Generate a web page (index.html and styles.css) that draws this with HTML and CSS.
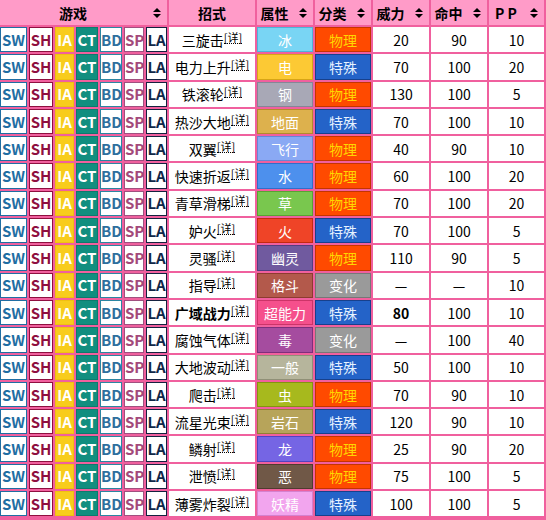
FILE: index.html
```html
<!DOCTYPE html>
<html lang="zh">
<head>
<meta charset="utf-8">
<title>招式表</title>
<link rel="stylesheet" href="styles.css">
</head>
<body>
<div class="wrap">
<table class="moves">
<colgroup>
<col class="w27"><col class="w24"><col class="w19"><col class="w22"><col class="w22"><col class="w20"><col class="w21">
<col class="w86"><col class="w56"><col class="w56"><col class="w56"><col class="w56"><col class="w55">
</colgroup>
<thead>
<tr>
<th colspan="7"><div class="hd"><span class="lbl">游戏</span><svg class="sort" viewBox="0 0 8 10" width="8" height="10"><polygon points="0,4 4,0 8,4"/><polygon points="0,6 8,6 4,10"/></svg></div></th>
<th><div class="hd plain"><span class="lbl">招式</span></div></th>
<th><div class="hd"><span class="lbl">属性</span><svg class="sort" viewBox="0 0 8 10" width="8" height="10"><polygon points="0,4 4,0 8,4"/><polygon points="0,6 8,6 4,10"/></svg></div></th>
<th><div class="hd"><span class="lbl">分类</span><svg class="sort" viewBox="0 0 8 10" width="8" height="10"><polygon points="0,4 4,0 8,4"/><polygon points="0,6 8,6 4,10"/></svg></div></th>
<th><div class="hd"><span class="lbl">威力</span><svg class="sort" viewBox="0 0 8 10" width="8" height="10"><polygon points="0,4 4,0 8,4"/><polygon points="0,6 8,6 4,10"/></svg></div></th>
<th><div class="hd"><span class="lbl">命中</span><svg class="sort" viewBox="0 0 8 10" width="8" height="10"><polygon points="0,4 4,0 8,4"/><polygon points="0,6 8,6 4,10"/></svg></div></th>
<th><div class="hd"><span class="lbl">P P</span><svg class="sort" viewBox="0 0 8 10" width="8" height="10"><polygon points="0,4 4,0 8,4"/><polygon points="0,6 8,6 4,10"/></svg></div></th>
</tr>
</thead>
<tbody>
<tr><td class="g sw">SW</td><td class="g sh">SH</td><td class="g ia">IA</td><td class="g ct">CT</td><td class="g bd">BD</td><td class="g sp">SP</td><td class="g la">LA</td><td class="mv">三旋击<span class="sup">[详]</span></td><td class="ty t-ice">冰</td><td class="ca c-phy">物理</td><td>20</td><td>90</td><td>10</td></tr>
<tr><td class="g sw">SW</td><td class="g sh">SH</td><td class="g ia">IA</td><td class="g ct">CT</td><td class="g bd">BD</td><td class="g sp">SP</td><td class="g la">LA</td><td class="mv">电力上升<span class="sup">[详]</span></td><td class="ty t-ele">电</td><td class="ca c-spe">特殊</td><td>70</td><td>100</td><td>20</td></tr>
<tr><td class="g sw">SW</td><td class="g sh">SH</td><td class="g ia">IA</td><td class="g ct">CT</td><td class="g bd">BD</td><td class="g sp">SP</td><td class="g la">LA</td><td class="mv">铁滚轮<span class="sup">[详]</span></td><td class="ty t-ste">钢</td><td class="ca c-phy">物理</td><td>130</td><td>100</td><td>5</td></tr>
<tr><td class="g sw">SW</td><td class="g sh">SH</td><td class="g ia">IA</td><td class="g ct">CT</td><td class="g bd">BD</td><td class="g sp">SP</td><td class="g la">LA</td><td class="mv">热沙大地<span class="sup">[详]</span></td><td class="ty t-gro">地面</td><td class="ca c-spe">特殊</td><td>70</td><td>100</td><td>10</td></tr>
<tr><td class="g sw">SW</td><td class="g sh">SH</td><td class="g ia">IA</td><td class="g ct">CT</td><td class="g bd">BD</td><td class="g sp">SP</td><td class="g la">LA</td><td class="mv">双翼<span class="sup">[详]</span></td><td class="ty t-fly">飞行</td><td class="ca c-phy">物理</td><td>40</td><td>90</td><td>10</td></tr>
<tr><td class="g sw">SW</td><td class="g sh">SH</td><td class="g ia">IA</td><td class="g ct">CT</td><td class="g bd">BD</td><td class="g sp">SP</td><td class="g la">LA</td><td class="mv">快速折返<span class="sup">[详]</span></td><td class="ty t-wat">水</td><td class="ca c-phy">物理</td><td>60</td><td>100</td><td>20</td></tr>
<tr><td class="g sw">SW</td><td class="g sh">SH</td><td class="g ia">IA</td><td class="g ct">CT</td><td class="g bd">BD</td><td class="g sp">SP</td><td class="g la">LA</td><td class="mv">青草滑梯<span class="sup">[详]</span></td><td class="ty t-gra">草</td><td class="ca c-phy">物理</td><td>70</td><td>100</td><td>20</td></tr>
<tr><td class="g sw">SW</td><td class="g sh">SH</td><td class="g ia">IA</td><td class="g ct">CT</td><td class="g bd">BD</td><td class="g sp">SP</td><td class="g la">LA</td><td class="mv">妒火<span class="sup">[详]</span></td><td class="ty t-fir">火</td><td class="ca c-spe">特殊</td><td>70</td><td>100</td><td>5</td></tr>
<tr><td class="g sw">SW</td><td class="g sh">SH</td><td class="g ia">IA</td><td class="g ct">CT</td><td class="g bd">BD</td><td class="g sp">SP</td><td class="g la">LA</td><td class="mv">灵骚<span class="sup">[详]</span></td><td class="ty t-gho">幽灵</td><td class="ca c-phy">物理</td><td>110</td><td>90</td><td>5</td></tr>
<tr><td class="g sw">SW</td><td class="g sh">SH</td><td class="g ia">IA</td><td class="g ct">CT</td><td class="g bd">BD</td><td class="g sp">SP</td><td class="g la">LA</td><td class="mv">指导<span class="sup">[详]</span></td><td class="ty t-fig">格斗</td><td class="ca c-sta">变化</td><td>—</td><td>—</td><td>10</td></tr>
<tr><td class="g sw">SW</td><td class="g sh">SH</td><td class="g ia">IA</td><td class="g ct">CT</td><td class="g bd">BD</td><td class="g sp">SP</td><td class="g la">LA</td><td class="mv"><b>广域战力</b><span class="sup">[详]</span></td><td class="ty t-psy">超能力</td><td class="ca c-spe">特殊</td><td><b>80</b></td><td>100</td><td>10</td></tr>
<tr><td class="g sw">SW</td><td class="g sh">SH</td><td class="g ia">IA</td><td class="g ct">CT</td><td class="g bd">BD</td><td class="g sp">SP</td><td class="g la">LA</td><td class="mv">腐蚀气体<span class="sup">[详]</span></td><td class="ty t-poi">毒</td><td class="ca c-sta">变化</td><td>—</td><td>100</td><td>40</td></tr>
<tr><td class="g sw">SW</td><td class="g sh">SH</td><td class="g ia">IA</td><td class="g ct">CT</td><td class="g bd">BD</td><td class="g sp">SP</td><td class="g la">LA</td><td class="mv">大地波动<span class="sup">[详]</span></td><td class="ty t-nor">一般</td><td class="ca c-spe">特殊</td><td>50</td><td>100</td><td>10</td></tr>
<tr><td class="g sw">SW</td><td class="g sh">SH</td><td class="g ia">IA</td><td class="g ct">CT</td><td class="g bd">BD</td><td class="g sp">SP</td><td class="g la">LA</td><td class="mv">爬击<span class="sup">[详]</span></td><td class="ty t-bug">虫</td><td class="ca c-phy">物理</td><td>70</td><td>90</td><td>10</td></tr>
<tr><td class="g sw">SW</td><td class="g sh">SH</td><td class="g ia">IA</td><td class="g ct">CT</td><td class="g bd">BD</td><td class="g sp">SP</td><td class="g la">LA</td><td class="mv">流星光束<span class="sup">[详]</span></td><td class="ty t-roc">岩石</td><td class="ca c-spe">特殊</td><td>120</td><td>90</td><td>10</td></tr>
<tr><td class="g sw">SW</td><td class="g sh">SH</td><td class="g ia">IA</td><td class="g ct">CT</td><td class="g bd">BD</td><td class="g sp">SP</td><td class="g la">LA</td><td class="mv">鳞射<span class="sup">[详]</span></td><td class="ty t-dra">龙</td><td class="ca c-phy">物理</td><td>25</td><td>90</td><td>20</td></tr>
<tr><td class="g sw">SW</td><td class="g sh">SH</td><td class="g ia">IA</td><td class="g ct">CT</td><td class="g bd">BD</td><td class="g sp">SP</td><td class="g la">LA</td><td class="mv">泄愤<span class="sup">[详]</span></td><td class="ty t-dar">恶</td><td class="ca c-phy">物理</td><td>75</td><td>100</td><td>5</td></tr>
<tr><td class="g sw">SW</td><td class="g sh">SH</td><td class="g ia">IA</td><td class="g ct">CT</td><td class="g bd">BD</td><td class="g sp">SP</td><td class="g la">LA</td><td class="mv">薄雾炸裂<span class="sup">[详]</span></td><td class="ty t-fai">妖精</td><td class="ca c-spe">特殊</td><td>100</td><td>100</td><td>5</td></tr>
</tbody>
</table>
</div>
</body>
</html>
```

FILE: styles.css
```css
html, body {
  margin: 0;
  padding: 0;
  overflow: hidden;
  background: #ffffff;
}

.wrap {
  width: 546px;
  height: 520px;
  overflow: hidden;
  background: #f0609e;
}

.moves {
  border-collapse: separate;
  border-spacing: 2px;
  margin: -2px 0 0 -2px;
  table-layout: fixed;
  width: 548px;
  background: #f0609e;
  font-family: "Noto Sans CJK SC", sans-serif;
  font-size: 14px;
  color: #000;
}

.w27 { width: 27px; }
.w24 { width: 24px; }
.w19 { width: 19px; }
.w22 { width: 22px; }
.w20 { width: 20px; }
.w21 { width: 21px; }
.w86 { width: 86px; }
.w56 { width: 56px; }
.w55 { width: 55px; }

.moves th {
  background: #ff9bc8;
  height: 25px;
  padding: 0;
  font-weight: bold;
  line-height: 18px;
}

.hd {
  display: flex;
  align-items: center;
}

.hd .lbl {
  flex: 1;
  text-align: center;
  white-space: nowrap;
}

.sort {
  flex: none;
  margin: 0 6px 0 7px;
  fill: #000;
}

.moves td {
  height: 25.3px;
  padding: 0;
  text-align: center;
  background: #fff;
  line-height: 18px;
  box-sizing: border-box;
  white-space: nowrap;
}

.moves td.g {
  font-size: 15px;
  font-weight: bold;
  border: 1px solid;
}

.sw { color: #1f6ea3; border-color: #1f6ea3 !important; }
.sh { color: #8f0f40; border-color: #8f0f40 !important; }
.moves td.ia { color: #fff; background: #f8cc1c; border-color: #f0c010; }
.moves td.ct { color: #fff; background: #118e7f; border-color: #0c7a6d; }
.bd { color: #2f6f9d; border-color: #2b86a2 !important; }
.sp { color: #a3497a; border-color: #a0507f !important; }
.la { color: #0f2748; border-color: #142240 !important; }

.mv .sup {
  display: inline-block;
  font-size: 11px;
  line-height: 11px;
  vertical-align: 4px;
  border-bottom: 1px dotted #000;
}

.moves td.ty,
.moves td.ca {
  color: #fff;
  border: 1px solid;
}

.moves td.t-ice { background: #79d5f4; border-color: #4fb4d9; }
.moves td.t-ele { background: #fcc934; border-color: #d7a516; }
.moves td.t-ste { background: #a8a8b6; border-color: #868696; }
.moves td.t-gro { background: #ddb14d; border-color: #b48a2c; }
.moves td.t-fly { background: #8aa9f4; border-color: #6787d5; }
.moves td.t-wat { background: #4d90ed; border-color: #2f6fcb; }
.moves td.t-gra { background: #79c74e; border-color: #58a333; }
.moves td.t-fir { background: #ef4427; border-color: #c22a10; }
.moves td.t-gho { background: #705a9f; border-color: #543d80; }
.moves td.t-fig { background: #b3594b; border-color: #8c3c30; }
.moves td.t-psy { background: #f5508c; border-color: #cc3468; }
.moves td.t-poi { background: #a54c9f; border-color: #7e2f7b; }
.moves td.t-nor { background: #b6b59c; border-color: #909077; }
.moves td.t-bug { background: #a7b91d; border-color: #84940f; }
.moves td.t-roc { background: #b7a45a; border-color: #927f32; }
.moves td.t-dra { background: #7565e4; border-color: #5142c0; }
.moves td.t-dar { background: #705847; border-color: #4f3c2f; }
.moves td.t-fai { background: #f2a5ee; border-color: #d581cf; }

.moves td.c-phy { background: #ff4a00; border-color: #c43400; color: #ffd700; }
.moves td.c-spe { background: #2463c8; border-color: #17408c; color: #e6f2ff; }
.moves td.c-sta { background: #9a9a9a; border-color: #777777; color: #fff; }
```
